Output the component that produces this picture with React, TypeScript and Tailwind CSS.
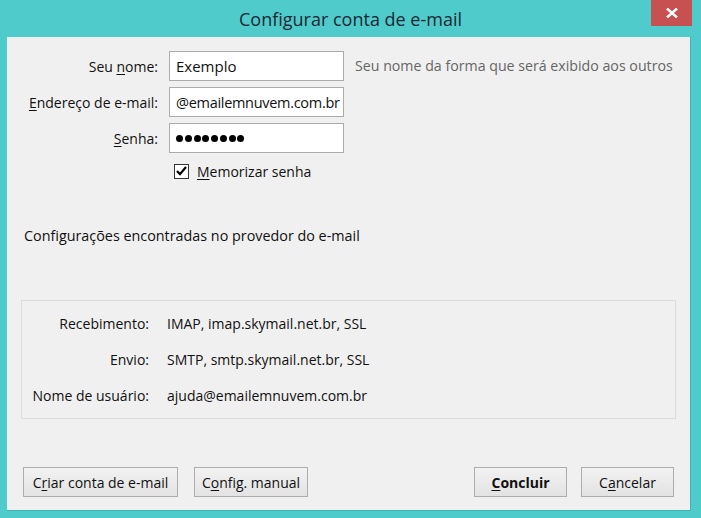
import React from 'react';

const font = { fontFamily: '"Open Sans", "Noto Sans", sans-serif' };

const Key: React.FC<{ children: React.ReactNode }> = ({ children }) => (
  <span className="underline underline-offset-2">{children}</span>
);

const Btn: React.FC<{ w: string; bold?: boolean; children: React.ReactNode }> = ({ w, bold, children }) => (
  <button
    className={`${w} h-[30px] border border-[#adadad] bg-gradient-to-b from-[#f2f2f2] to-[#e3e3e3] text-[14px] text-[#111] ${bold ? 'font-bold' : ''}`}
  >
    {children}
  </button>
);

const App: React.FC = () => {
  return (
    <div className="w-[701px] h-[518px] bg-[#50cbcb] flex flex-col" style={font}>
      <div className="relative h-[37px] flex items-center justify-center">
        <span className="text-[18px] text-[#1c2833] pt-[1px]">Configurar conta de e-mail</span>
        <button className="absolute right-[9px] top-0 w-[41px] h-[26px] bg-[#c75050] flex items-center justify-center">
          <svg width="12" height="10" viewBox="0 0 12 10">
            <path d="M1 0.5 L11 9.5 M11 0.5 L1 9.5" stroke="#fff" strokeWidth="2.4" />
          </svg>
        </button>
      </div>

      <div className="ml-[7px] w-[684px] h-[474px] bg-[#f0f0f0] border-r border-b border-[#3fb4b4] flex flex-col text-[14px] text-[#111]">
        <div className="grid grid-cols-[151px_175px_1fr] gap-x-[11px] gap-y-[6px] pt-[14px] items-center">
          <label className="text-right">Seu <Key>n</Key>ome:</label>
          <input
            readOnly
            value="Exemplo"
            className="h-[30px] w-[175px] border border-[#ababab] bg-white px-[6px] text-[15px] outline-none"
          />
          <span className="text-[#666] text-[14.2px]">Seu nome da forma que será exibido aos outros</span>

          <label className="text-right"><Key>E</Key>ndereço de e-mail:</label>
          <input
            readOnly
            value="@emailemnuvem.com.br"
            className="h-[30px] w-[175px] border border-[#ababab] bg-white pl-[6px] pr-0 text-[14.5px] tracking-[-0.3px] outline-none"
          />
          <span />

          <label className="text-right"><Key>S</Key>enha:</label>
          <div className="h-[30px] w-[175px] border border-[#ababab] bg-white px-[6px] flex items-center gap-[1.75px]">
            {Array.from({ length: 8 }).map((_, i) => (
              <span key={i} className="w-[7px] h-[7px] rounded-full bg-black" />
            ))}
          </div>
          <span />

          <span />
          <label className="flex items-center gap-[8px] pl-[5px] h-[24px]">
            <span className="w-[15px] h-[15px] border border-[#333] bg-white flex items-center justify-center">
              <svg width="11" height="10" viewBox="0 0 11 10">
                <path d="M1 5 L4 8.2 L10 1" stroke="#000" strokeWidth="2.2" fill="none" />
              </svg>
            </span>
            <span><Key>M</Key>emorizar senha</span>
          </label>
          <span />
        </div>

        <p className="mt-[42px] pl-[17px] text-[14.35px]">Configurações encontradas no provedor do e-mail</p>

        <div className="mt-[53px] mx-[14px] h-[119px] border border-[#dcdcdc] grid grid-cols-[127px_1fr] gap-x-[18px] content-start pt-[13px] gap-y-[16px] text-[14px]">
          <span className="text-right h-[20px] leading-[20px]">Recebimento:</span>
          <span className="leading-[20px]">IMAP, imap.skymail.net.br, SSL</span>
          <span className="text-right h-[20px] leading-[20px]">Envio:</span>
          <span className="leading-[20px]">SMTP, smtp.skymail.net.br, SSL</span>
          <span className="text-right h-[20px] leading-[20px]">Nome de usuário:</span>
          <span className="leading-[20px]">ajuda@emailemnuvem.com.br</span>
        </div>

        <div className="mt-auto mb-[13px] flex items-center px-[16px]">
          <Btn w="w-[155px]">C<Key>r</Key>iar conta de e-mail</Btn>
          <div className="w-[16px]" />
          <Btn w="w-[114px]">C<Key>o</Key>nfig. manual</Btn>
          <div className="flex-1" />
          <Btn w="w-[93px]" bold><Key>C</Key>oncluir</Btn>
          <div className="w-[14px]" />
          <Btn w="w-[93px]">C<Key>a</Key>ncelar</Btn>
        </div>
      </div>
    </div>
  );
};

export default App;
